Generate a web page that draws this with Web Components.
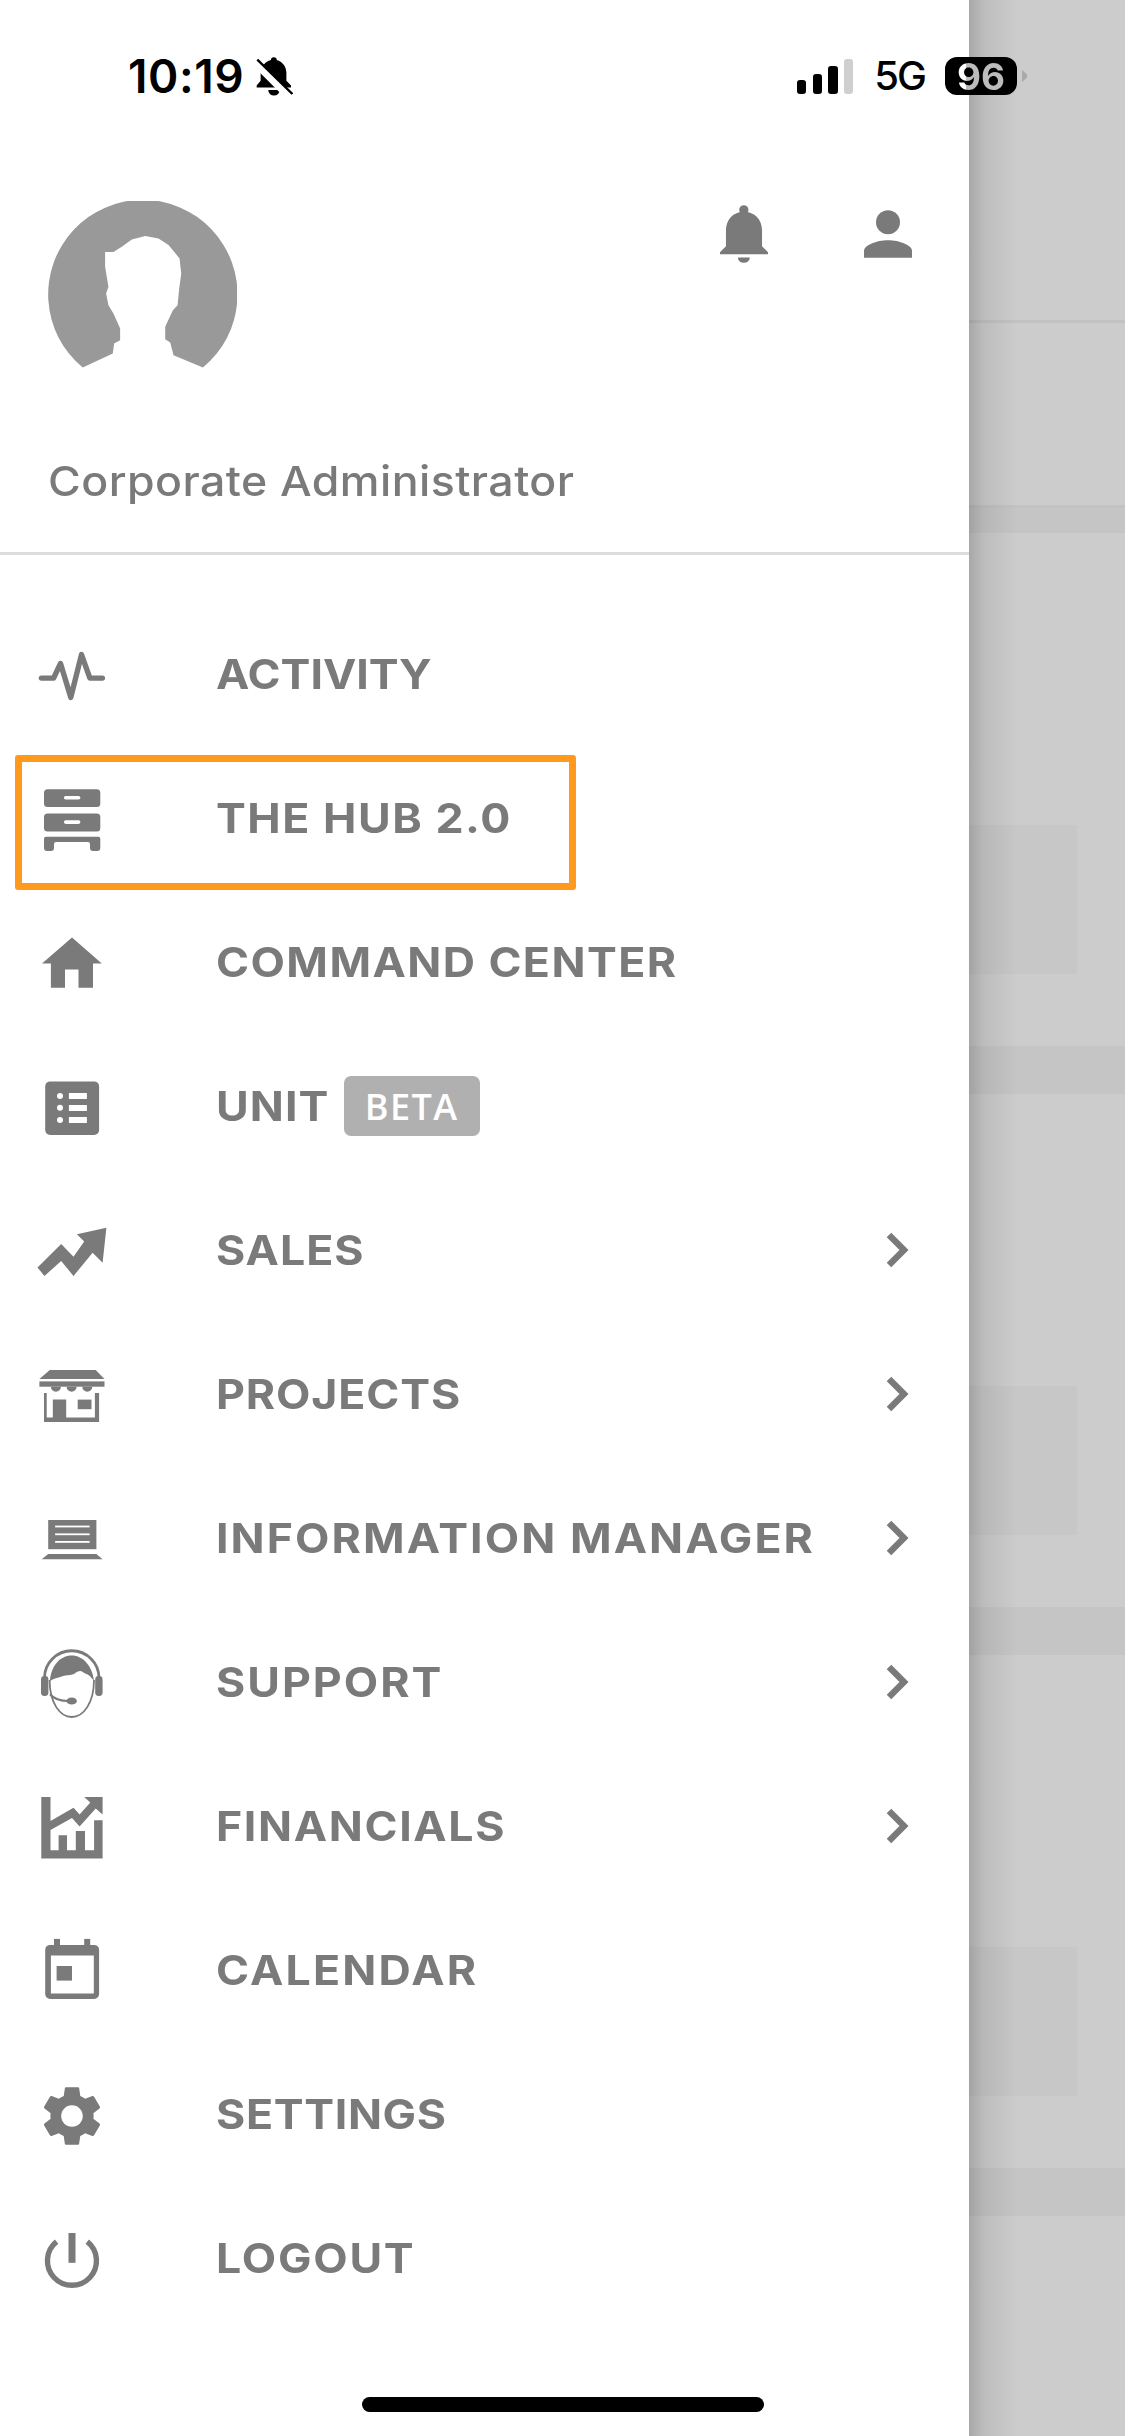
<!DOCTYPE html>
<html lang="en">
<head>
<meta charset="utf-8">
<title>Drawer</title>
<style>
  html, body { margin: 0; padding: 0; background: #fff; }
</style>
</head>
<body>
<app-screen>
  <nav-drawer>
    <drawer-header name="Corporate Administrator"></drawer-header>
    <menu-item icon="activity" spacing="0">ACTIVITY</menu-item>
    <menu-item icon="hub" spacing="1.4" highlight>THE HUB 2.0</menu-item>
    <menu-item icon="home" spacing="1.3">COMMAND CENTER</menu-item>
    <menu-item icon="list" spacing="1">UNIT<beta-badge slot="extra">BETA</beta-badge></menu-item>
    <menu-item icon="sales" spacing="0.9" arrow>SALES</menu-item>
    <menu-item icon="store" spacing="0.8" arrow>PROJECTS</menu-item>
    <menu-item icon="laptop" spacing="1.9" arrow>INFORMATION MANAGER</menu-item>
    <menu-item icon="support" spacing="1.8" arrow>SUPPORT</menu-item>
    <menu-item icon="chart" spacing="1.5" arrow>FINANCIALS</menu-item>
    <menu-item icon="calendar" spacing="2">CALENDAR</menu-item>
    <menu-item icon="gear" spacing="0.6">SETTINGS</menu-item>
    <menu-item icon="power" spacing="1.6">LOGOUT</menu-item>
  </nav-drawer>
  <dim-page></dim-page>
  <status-bar></status-bar>
  <home-indicator></home-indicator>
</app-screen>

<script>
// icons are all on a 72x72 box, centred on the row
const ICONS = {
  activity: `<polyline points="5.4,38.1 17.6,38.1 24.5,23.5 34.8,57.4 45.5,14.6 53.9,38.1 66.4,38.1" fill="none" stroke="currentColor" stroke-width="5.4" stroke-linecap="round" stroke-linejoin="round"/>`,
  hub: `<rect x="8" y="5.2" width="56.3" height="17.8" rx="3.5"/><rect x="8" y="29.5" width="56.3" height="17.9" rx="3.5"/>
    <rect x="27.9" y="12" width="16.5" height="3.6" rx="1.8" fill="#fff"/><rect x="27.9" y="36.3" width="16.5" height="3.6" rx="1.8" fill="#fff"/>
    <path d="M10 52.7H62.3a2 2 0 0 1 2 2V64a3 3 0 0 1-3 3H57a3 3 0 0 1-3-3V60a2 2 0 0 0-2-2H20a2 2 0 0 0-2 2V64a3 3 0 0 1-3 3H11a3 3 0 0 1-3-3V54.7a2 2 0 0 1 2-2Z"/>`,
  home: `<path d="M36 9.4L65.8 35.5H57V59.8H42.5V41.6H29V59.8H14.9V35.5H6Z"/>`,
  list: `<rect x="9.2" y="9.4" width="53.9" height="53.5" rx="5"/>
    <g fill="#fff"><circle cx="24" cy="24" r="3"/><circle cx="24" cy="35.8" r="3"/><circle cx="24" cy="47.9" r="3"/>
    <rect x="32.9" y="21" width="18" height="6"/><rect x="32.9" y="33" width="18" height="6"/><rect x="32.9" y="45" width="18" height="6"/></g>`,
  sales: `<path d="M70.4 11.8L40.9 18.2L48.2 25.4L37.5 40.7L25.2 27.9L1.5 51.4L8.4 60L25.2 45L37.5 60L56.6 36.8L66.6 46.8Z"/>`,
  store: `<path d="M13.8 9.9H59.7L68.5 18.9H3.4Z"/><rect x="3.4" y="21.4" width="65.1" height="5.3"/>
    <path d="M14.9 26.7h10a5 5 0 0 1-10 0ZM30.6 26.7h10a5 5 0 0 1-10 0ZM46.3 26.7h10a5 5 0 0 1-10 0Z"/>
    <path d="M8 33H10.7V57.4H16.8V39.6H30.2V57.4H58.9V33H63.1V62H8Z"/><rect x="41.7" y="39.6" width="13.8" height="9.6"/>`,
  laptop: `<rect x="12.2" y="16" width="48.2" height="29.2"/>
    <g fill="#fff"><rect x="19.1" y="21.6" width="34.5" height="1.8"/><rect x="19.1" y="29.4" width="34.5" height="1.8"/><rect x="19.1" y="37" width="34.5" height="1.8"/></g>
    <path d="M12.2 49.9H60.4L66.6 55.2H5.7Z"/>`,
  support: `<path d="M8.5 30A27.2 27.2 0 0 1 63 30" fill="none" stroke="currentColor" stroke-width="2.8"/>
    <rect x="5" y="28" width="7.4" height="20" rx="3.4"/><rect x="59.2" y="28" width="7.4" height="20" rx="3.4"/>
    <path d="M14 33C15 18 24 7.5 35.7 7.5C47 7.5 56.5 18 58 33C55 29 52 26.3 50.7 26.3C48 25 46 23 44 23C41 23 39.5 25.5 37.3 26.3C33 28 30 27 27.3 28C22 29.5 17 31 14 33Z"/>
    <path d="M13.6 32C13.6 55 24 69 35.7 69C47.5 69 58 55 58 32" fill="none" stroke="currentColor" stroke-width="1.8"/>
    <path d="M14 46.3C17 50 24 53 33 53" fill="none" stroke="currentColor" stroke-width="2.2"/><ellipse cx="35.7" cy="53" rx="5.2" ry="3.6"/>`,
  chart: `<path d="M5.3 5H14.5V29L37.5 15.8L43.6 22.6L54.3 10.4L48.2 5H66.6V22.6L59.7 16.5L43.6 34.4L36 26.1L14.5 37.9V58.3H22.6V43.3H31V58.3H39.8V39H49V58.3H58.1V28.3H66.6V66.5H5.3Z"/>`,
  calendar: `<rect x="18" y="2.9" width="6" height="8"/><rect x="48.2" y="2.9" width="6" height="8"/>
    <path fill-rule="evenodd" d="M14.2 8.9H58.1a5 5 0 0 1 5 5V57.9a5 5 0 0 1-5 5H14.2a5 5 0 0 1-5-5V13.9a5 5 0 0 1 5-5ZM14.9 19.6V57.5H57.8V19.6Z"/>
    <rect x="20.6" y="30" width="15.4" height="14.6"/>`,
  gear: `<path transform="scale(3)" d="M19.14 12.94c.04-.3.06-.61.06-.94 0-.32-.02-.64-.07-.94l2.03-1.58c.18-.14.23-.41.12-.61l-1.92-3.32c-.12-.22-.37-.29-.59-.22l-2.39.96c-.5-.38-1.03-.7-1.62-.94l-.36-2.54c-.04-.24-.24-.41-.48-.41h-3.84c-.24 0-.43.17-.47.41l-.36 2.54c-.59.24-1.13.57-1.62.94l-2.39-.96c-.22-.08-.47 0-.59.22L2.74 8.87c-.12.21-.08.47.12.61l2.03 1.58c-.05.3-.09.63-.09.94s.02.64.07.94l-2.03 1.58c-.18.14-.23.41-.12.61l1.92 3.32c.12.22.37.29.59.22l2.39-.96c.5.38 1.03.7 1.62.94l.36 2.54c.05.24.24.41.48.41h3.84c.24 0 .44-.17.47-.41l.36-2.54c.59-.24 1.13-.56 1.62-.94l2.39.96c.22.08.47 0 .59-.22l1.92-3.32c.12-.22.07-.47-.12-.61l-2.01-1.58zM12 15.6c-1.98 0-3.6-1.62-3.6-3.6s1.62-3.6 3.6-3.6 3.6 1.62 3.6 3.6-1.62 3.6-3.6 3.6z"/>`,
  power: `<path d="M20.6 17.7A24.5 24.5 0 1 0 51.3 17.7" fill="none" stroke="currentColor" stroke-width="5.4"/><rect x="32.5" y="9" width="7" height="29.8"/>`
};

class AppScreen extends HTMLElement {
  constructor() {
    super();
    this.attachShadow({mode: "open"}).innerHTML = `
      <style>
        :host { display: flex; position: relative; width: 1125px; height: 2436px; overflow: hidden; background: #fff; color: #7a7a7a; font-family: Inter, "Liberation Sans", sans-serif; }
      </style>
      <slot></slot>`;
  }
}

class NavDrawer extends HTMLElement {
  constructor() {
    super();
    this.attachShadow({mode: "open"}).innerHTML = `
      <style>
        :host { display: block; flex: none; width: 969px; background: #fff; }
      </style>
      <slot></slot>`;
  }
}

class DrawerHeader extends HTMLElement {
  constructor() {
    super();
    this.attachShadow({mode: "open"}).innerHTML = `
      <style>
        :host { display: block; padding: 201px 0 0; border-bottom: 3px solid #dcdcdc; margin-bottom: 49px; }
        .top { display: flex; align-items: flex-start; padding: 0 57px 0 48px; }
        .avatar { display: block; width: 189px; height: 166.6px; }
        .actions { display: flex; gap: 96px; margin-left: auto; padding-top: 4px; }
        .actions svg { display: block; fill: currentColor; }
        .person { margin-top: 5px; }
        /* wider letters, the real face is a broad geometric one */
        .name { margin: 89px 0 0 48px; height: 95px; font-size: 41px; font-weight: 500; line-height: 48px; letter-spacing: 0.4px; white-space: nowrap; transform: scaleX(1.09); transform-origin: 0 0; }
      </style>
      <div class="top">
        <svg class="avatar" viewBox="54 33 566 499" fill="#999999">
          <path d="M158 532A283.5 283.5 0 1 1 518 532L430 495L420 457L405 447V410L428 360L442 345L447 295L453 250L448 205L415 165L385 145L345 138L305 148L275 170L250 186H225V230L235 290L228 310L235 345L250 370L270 415V450L252 460L248 490Z"/>
        </svg>
        <div class="actions">
          <svg width="48" height="58" viewBox="60 46 145 174">
            <circle cx="132" cy="60" r="14"/>
            <path d="M60 194V188L78 170V122C78 90 100 66 132 66C165 66 187 90 187 122V170L205 188V194Z"/>
            <path d="M114 204H150A18 16 0 0 1 114 204Z"/>
          </svg>
          <svg class="person" width="48" height="48" viewBox="492 60 144 143">
            <circle cx="564" cy="96" r="36"/>
            <path d="M492 203V182C492 165 530 150 564 150C598 150 636 165 636 182V203Z"/>
          </svg>
        </div>
      </div>
      <div class="name"></div>`;
    this.shadowRoot.querySelector(".name").textContent = this.getAttribute("name");
  }
}

class MenuItem extends HTMLElement {
  constructor() {
    super();
    const name = this.getAttribute("icon");
    const arrow = this.hasAttribute("arrow") ? `<svg class="chev" width="28" height="36" viewBox="0 0 28 36"><polyline points="6,3 21,18 6,33" fill="none" stroke="currentColor" stroke-width="6.4"/></svg>` : "";
    this.attachShadow({mode: "open"}).innerHTML = `
      <style>
        :host { display: flex; align-items: center; position: relative; height: 144px; padding-left: 36px; }
        .icon { display: block; flex: none; width: 72px; height: 72px; fill: currentColor; }
        .label { display: block; margin: 0 0 3px 108px; font-size: 41px; font-weight: 700; white-space: nowrap; transform: scaleX(1.09); transform-origin: 0 50%; }
        .chev { display: block; flex: none; margin: 0 58px 3px auto; }
        /* orange callout drawn round the row */
        :host([highlight])::after { content: ""; position: absolute; left: 15px; top: 7px; width: 561px; height: 135px; box-sizing: border-box; border: 7px solid #ff9a1f; border-radius: 3px; }
      </style>
      <svg class="icon" viewBox="0 0 72 72">${ICONS[name]}</svg>
      <span class="label"><slot></slot></span>
      <slot name="extra"></slot>
      ${arrow}`;
    this.shadowRoot.querySelector(".label").style.letterSpacing = this.getAttribute("spacing") + "px";
  }
}

class BetaBadge extends HTMLElement {
  constructor() {
    super();
    this.attachShadow({mode: "open"}).innerHTML = `
      <style>
        :host { display: flex; align-items: center; justify-content: center; box-sizing: border-box; width: 136px; height: 60px; margin: 0 0 3px 23.5px; border-radius: 7px; background: #b0b0b0; color: #fff; font-family: "Open Sans", sans-serif; font-size: 36px; font-weight: 600; letter-spacing: 1.5px; }
      </style>
      <slot></slot>`;
  }
}

class DimPage extends HTMLElement {
  constructor() {
    super();
    const card = `<div class="card"><div class="block"></div></div>`;
    this.attachShadow({mode: "open"}).innerHTML = `
      <style>
        :host { display: block; position: relative; flex: 1; background: #cccccc; overflow: hidden; }
        /* shadow the drawer throws on the page behind it */
        :host::after { content: ""; position: absolute; top: 0; bottom: 0; left: 0; width: 48px; background: linear-gradient(90deg, rgba(0,0,0,.18), rgba(0,0,0,.08) 14px, rgba(0,0,0,0)); }
        .head { height: 320px; border-bottom: 3px solid #c2c2c2; }
        .sub { height: 182px; border-bottom: 3px solid #c2c2c2; }
        .band { height: 25px; background: #c5c5c5; }
        .band.big { height: 48px; }
        .card { height: 513px; padding-top: 292px; box-sizing: border-box; }
        .card:first-of-type { height: 514px; }
        .block { height: 149px; margin-right: 48px; background: #c7c7c7; }
      </style>
      <div class="head"></div>
      <div class="sub"></div>
      <div class="band"></div>
      ${card}<div class="band big"></div>
      ${card}<div class="band big"></div>
      ${card}<div class="band big"></div>
      <div class="card"></div>`;
  }
}

class StatusBar extends HTMLElement {
  constructor() {
    super();
    this.attachShadow({mode: "open"}).innerHTML = `
      <style>
        :host { position: absolute; top: 56px; left: 0; right: 0; display: flex; align-items: center; height: 40px; padding: 0 98px 0 128px; color: #000; font-family: Inter, "Liberation Sans", sans-serif; }
        .time { font-size: 46px; font-weight: 600; line-height: 40px; letter-spacing: 0.6px; }
        .mute { display: block; margin-left: 12px; }
        .bars { display: flex; align-items: flex-end; gap: 6.6px; height: 35px; margin-left: auto; }
        .bars i { display: block; width: 9.2px; border-radius: 3px; background: #000; }
        .net { margin-left: 21px; font-size: 40px; font-weight: 500; line-height: 40px; letter-spacing: -2px; }
        .batt { display: flex; align-items: center; justify-content: center; width: 72px; height: 38px; margin-left: 20px; border-radius: 12px; background: #000; font-size: 37px; font-weight: 700; letter-spacing: 0; }
        /* the digits run past the drawer edge, so the part over the dimmed page is grey */
        .batt span { background: linear-gradient(90deg, #fff 9px, #bcbcbc 9px); -webkit-background-clip: text; background-clip: text; color: transparent; }
        .tip { display: block; margin-left: 5px; width: 5px; height: 12px; background: #a9a9a9; clip-path: polygon(0 0, 100% 35%, 100% 65%, 0 100%); }
      </style>
      <span class="time">10:19</span>
      <svg class="mute" width="37" height="39" viewBox="438 50 112 118">
        <circle cx="492" cy="60" r="9"/>
        <path d="M440 142V136L452 122V98C452 76 470 58 492 58C514 58 530 76 530 98V122L544 136V142Z"/>
        <path d="M475 150H510A17 16 0 0 1 475 150Z"/>
        <path d="M436 68L534 166" stroke="#fff" stroke-width="22"/>
        <path d="M442 58L548 162" stroke="#000" stroke-width="7"/>
      </svg>
      <div class="bars">
        <i style="height:13.4px"></i><i style="height:19.4px"></i><i style="height:27.4px"></i><i style="height:34.7px;background:#cfcfcf"></i>
      </div>
      <span class="net">5G</span>
      <div class="batt"><span>96</span></div>
      <i class="tip"></i>`;
  }
}

class HomeIndicator extends HTMLElement {
  constructor() {
    super();
    this.attachShadow({mode: "open"}).innerHTML = `
      <style>
        :host { position: absolute; left: 362px; bottom: 24px; width: 402px; height: 15px; border-radius: 8px; background: #000; }
      </style>`;
  }
}

customElements.define("app-screen", AppScreen);
customElements.define("nav-drawer", NavDrawer);
customElements.define("drawer-header", DrawerHeader);
customElements.define("menu-item", MenuItem);
customElements.define("beta-badge", BetaBadge);
customElements.define("dim-page", DimPage);
customElements.define("status-bar", StatusBar);
customElements.define("home-indicator", HomeIndicator);
</script>
</body>
</html>
